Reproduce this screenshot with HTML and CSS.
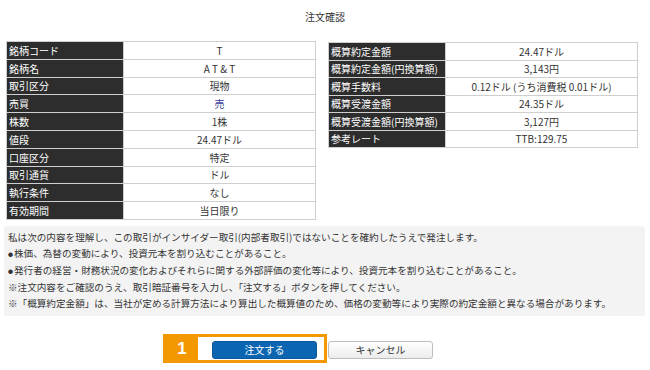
FILE: index.html
```html
<!DOCTYPE html>
<html lang="ja">
<head>
<meta charset="utf-8">
<title>注文確認</title>
<link rel="stylesheet" href="styles.css">
</head>
<body>
<div class="page">
  <h1 class="title">注文確認</h1>
  <div class="tables">
    <table class="info">
      <tr><th>銘柄コード</th><td>T</td></tr>
      <tr><th>銘柄名</th><td>A T &amp; T</td></tr>
      <tr><th>取引区分</th><td>現物</td></tr>
      <tr><th>売買</th><td class="sell">売</td></tr>
      <tr><th>株数</th><td>1株</td></tr>
      <tr><th>値段</th><td>24.47ドル</td></tr>
      <tr><th>口座区分</th><td>特定</td></tr>
      <tr><th>取引通貨</th><td>ドル</td></tr>
      <tr><th>執行条件</th><td>なし</td></tr>
      <tr><th>有効期間</th><td>当日限り</td></tr>
    </table>
    <table class="info info-right">
      <tr><th>概算約定金額</th><td>24.47ドル</td></tr>
      <tr><th>概算約定金額(円換算額)</th><td>3,143円</td></tr>
      <tr><th>概算手数料</th><td>0.12ドル (うち消費税 0.01ドル)</td></tr>
      <tr><th>概算受渡金額</th><td>24.35ドル</td></tr>
      <tr><th>概算受渡金額(円換算額)</th><td>3,127円</td></tr>
      <tr><th>参考レート</th><td>TTB:129.75</td></tr>
    </table>
  </div>
  <div class="notice">
    <p>私は次の内容を理解し、この取引がインサイダー取引(内部者取引)ではないことを確約したうえで発注します。</p>
    <p><span class="bullet">●</span>株価、為替の変動により、投資元本を割り込むことがあること。</p>
    <p><span class="bullet">●</span>発行者の経営・財務状況の変化およびそれらに関する外部評価の変化等により、投資元本を割り込むことがあること。</p>
    <p>※注文内容をご確認のうえ、取引暗証番号を入力し、「注文する」ボタンを押してください。</p>
    <p>※「概算約定金額」は、当社が定める計算方法により算出した概算値のため、価格の変動等により実際の約定金額と異なる場合があります。</p>
  </div>
  <div class="actions">
    <div class="primary-wrap">
      <div class="callout"><span class="callout-num">1</span></div>
      <button class="btn btn-primary" type="button">注文する</button>
    </div>
    <button class="btn btn-cancel" type="button">キャンセル</button>
  </div>
</div>
</body>
</html>
```

FILE: styles.css
```css
* { box-sizing: border-box; }
html, body { margin: 0; padding: 0; background: #fff; }
body {
  font-family: "Noto Sans CJK JP", "Noto Sans", sans-serif;
  font-size: 10px;
  color: #333;
  width: 650px;
  height: 370px;
  overflow: hidden;
}
.title {
  margin: 0;
  padding-top: 10px;
  height: 41px;
  font-size: 10px;
  font-weight: normal;
  line-height: 14px;
  text-align: center;
  color: #333;
}
.tables {
  display: flex;
  align-items: flex-start;
  gap: 12px;
  padding-left: 6px;
}
.info {
  width: 310px;
  border-collapse: collapse;
  table-layout: fixed;
}
.info-right { margin-top: 1px; }
.info th, .info td {
  border: 1px solid #cfcfcf;
  height: 17.8px;
  padding: 0;
  line-height: 15px;
  font-size: 10px;
}
.info-right th, .info-right td { height: 17.5px; }
.info th {
  width: 117px;
  background: #2d2d2d;
  color: #fff;
  text-align: left;
  font-weight: normal;
  padding-left: 2px;
  white-space: nowrap;
}
.info td {
  background: #fff;
  text-align: center;
  color: #333;
}
.info td.sell { color: #3a3a9a; }
.notice {
  margin: 6px 5px 0 4px;
  padding: 3px 4px 5px;
  background: #f3f3f3;
  border-radius: 3px;
  height: 90px;
}
.notice p {
  margin: 0;
  line-height: 16px;
  font-size: 9.6px;
  white-space: nowrap;
  color: #333;
}
.bullet {
  display: inline-block;
  width: 6px;
  font-size: 5px;
  vertical-align: 1px;
}
.actions {
  display: flex;
  justify-content: center;
  gap: 11px;
  margin-top: 25px;
  padding-right: 5px;
}
.primary-wrap { position: relative; }
.btn {
  width: 105px;
  height: 18px;
  font-family: inherit;
  font-size: 10px;
  line-height: 16px;
  padding: 0;
  border-radius: 3px;
  cursor: pointer;
}
.btn-primary {
  position: relative;
  z-index: 1;
  background: #0b65b1;
  color: #fff;
  border: 1px solid #0a5799;
}
.btn-cancel {
  background: linear-gradient(#ffffff, #ececec);
  color: #333;
  border: 1px solid #bdbdbd;
}
.callout {
  position: absolute;
  left: -49px;
  top: -7px;
  width: 164px;
  height: 29px;
  border: 3px solid #f39800;
  background: #fff;
  z-index: 0;
}
.callout-num {
  position: absolute;
  left: 0;
  top: 0;
  bottom: 0;
  width: 32px;
  background: #f39800;
  color: #fff;
  font-family: "Liberation Sans", Arial, sans-serif;
  font-weight: bold;
  font-size: 17px;
  line-height: 23px;
  text-align: center;
}
```
